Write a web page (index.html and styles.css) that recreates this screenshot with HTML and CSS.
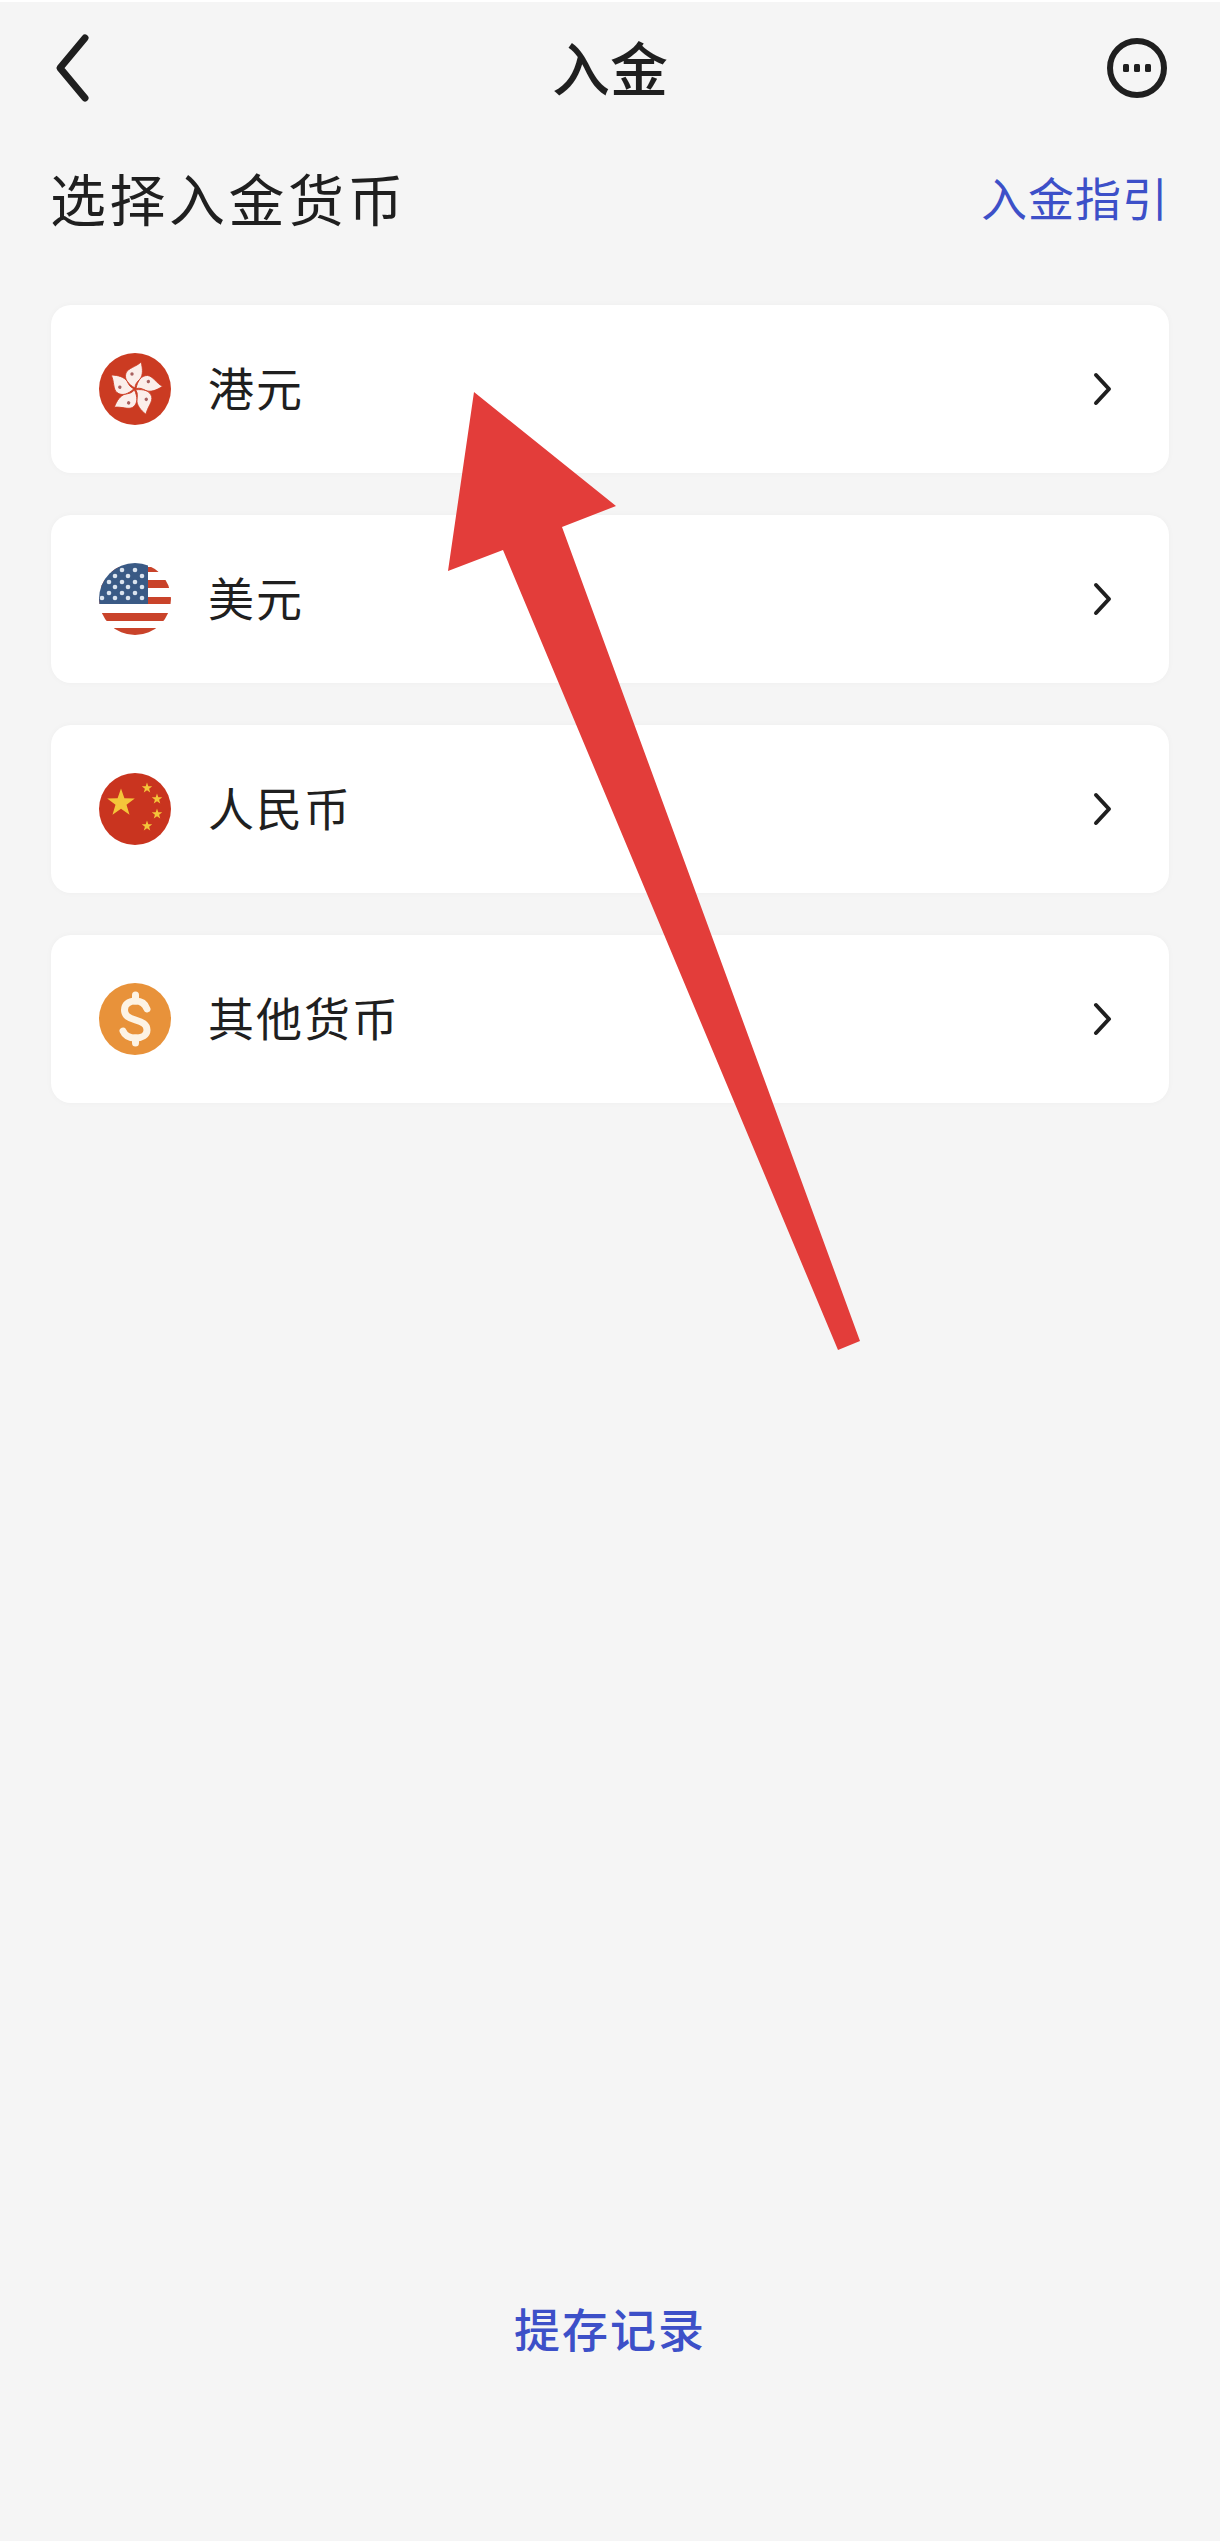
FILE: index.html
```html
<!DOCTYPE html>
<html lang="zh-CN">
<head>
  <meta charset="UTF-8" />
  <meta name="viewport" content="width=device-width, initial-scale=1.0" />
  <title>入金</title>
  <link rel="stylesheet" href="styles.css">
</head>
<body>
  <div class="page">
    <header class="nav">
      <svg class="nav-back" viewBox="0 0 40 70" width="40" height="70">
        <path d="M34 5 L9 35 L34 65" />
      </svg>
      <h1 class="nav-title">入金</h1>
      <svg class="nav-more" viewBox="0 0 60 60" width="60" height="60">
        <circle class="more-ring" cx="30" cy="30" r="27" />
        <rect x="16" y="26" width="6" height="8" rx="1.5" />
        <rect x="27" y="26" width="6" height="8" rx="1.5" />
        <rect x="38" y="26" width="6" height="8" rx="1.5" />
      </svg>
    </header>

    <div class="section-head">
      <h2 class="section-title">选择入金货币</h2>
      <a class="link guide">入金指引</a>
    </div>

    <ul class="currency-list">
      <li class="currency">
        <svg class="flag" viewBox="0 0 72 72" width="72" height="72">
          <defs>
            <g id="petal">
              <path d="M36 35 C29 31 25 26 27 20 C29 15 37 14 42 9 C44 16 44 22 41 26 C38 29 36 31 36 35 Z" fill="#fbeeea" stroke="#cb3b22" stroke-width=".8" />
              <circle cx="33" cy="21" r="1.7" fill="#a8605f" />
            </g>
          </defs>
          <circle cx="36" cy="36" r="36" fill="#cb3b22" />
          <use href="#petal" />
          <use href="#petal" transform="rotate(72 36 36)" />
          <use href="#petal" transform="rotate(144 36 36)" />
          <use href="#petal" transform="rotate(216 36 36)" />
          <use href="#petal" transform="rotate(288 36 36)" />
        </svg>
        <span class="currency-name">港元</span>
        <svg class="chevron" viewBox="0 0 20 34" width="20" height="34">
          <path d="M3 3 L16 17 L3 31" />
        </svg>
      </li>
      <li class="currency">
        <svg class="flag" viewBox="0 0 72 72" width="72" height="72">
          <defs>
            <clipPath id="disc"><circle cx="36" cy="36" r="36" /></clipPath>
          </defs>
          <g clip-path="url(#disc)">
            <rect width="72" height="72" fill="#fff" />
            <rect y="4" width="72" height="5" fill="#c9432a" />
            <rect y="17" width="72" height="8" fill="#c9432a" />
            <rect y="34" width="72" height="7" fill="#c9432a" />
            <rect y="50" width="72" height="8" fill="#c9432a" />
            <rect y="65" width="72" height="7" fill="#c9432a" />
            <rect width="49" height="41" fill="#3a5a85" />
            <g fill="#dbe4ef">
              <circle cx="23" cy="7" r="2.3" /><circle cx="36" cy="7" r="2.3" />
              <circle cx="16" cy="13" r="2.3" /><circle cx="29" cy="13" r="2.3" /><circle cx="43" cy="13" r="2.3" />
              <circle cx="10" cy="19" r="2.3" /><circle cx="23" cy="19" r="2.3" /><circle cx="36" cy="19" r="2.3" />
              <circle cx="16" cy="24" r="2.3" /><circle cx="29" cy="24" r="2.3" /><circle cx="43" cy="24" r="2.3" />
              <circle cx="10" cy="30" r="2.3" /><circle cx="23" cy="30" r="2.3" /><circle cx="36" cy="30" r="2.3" />
              <circle cx="3" cy="35" r="2.3" /><circle cx="16" cy="35" r="2.3" /><circle cx="29" cy="35" r="2.3" /><circle cx="43" cy="35" r="2.3" />
            </g>
          </g>
        </svg>
        <span class="currency-name">美元</span>
        <svg class="chevron" viewBox="0 0 20 34" width="20" height="34">
          <path d="M3 3 L16 17 L3 31" />
        </svg>
      </li>
      <li class="currency">
        <svg class="flag" viewBox="0 0 72 72" width="72" height="72">
          <defs>
            <polygon id="star" points="0,-10 2.35,-3.24 9.51,-3.09 3.8,1.24 5.88,8.09 0,4 -5.88,8.09 -3.8,1.24 -9.51,-3.09 -2.35,-3.24" />
          </defs>
          <circle cx="36" cy="36" r="36" fill="#c9341f" />
          <g fill="#f4c53a">
            <use href="#star" transform="translate(22 30) scale(1.45)" />
            <use href="#star" transform="translate(48 15) scale(.55)" />
            <use href="#star" transform="translate(58 26) scale(.55)" />
            <use href="#star" transform="translate(58 41) scale(.55)" />
            <use href="#star" transform="translate(48 53) scale(.55)" />
          </g>
        </svg>
        <span class="currency-name">人民币</span>
        <svg class="chevron" viewBox="0 0 20 34" width="20" height="34">
          <path d="M3 3 L16 17 L3 31" />
        </svg>
      </li>
      <li class="currency">
        <svg class="flag" viewBox="0 0 72 72" width="72" height="72">
          <circle cx="36" cy="36" r="36" fill="#e8923a" />
          <path class="dollar" d="M48 26 C46 20 42 18 36.5 18 C29 18 25.5 22 25.5 27 C25.5 33 30 35 36.5 37 C43 39 48 41 48 47 C48 52 43 55 36.5 55 C30 55 26 53 24 48" />
          <path class="dollar" d="M36.5 12 V18 M36.5 55 V60" />
        </svg>
        <span class="currency-name">其他货币</span>
        <svg class="chevron" viewBox="0 0 20 34" width="20" height="34">
          <path d="M3 3 L16 17 L3 31" />
        </svg>
      </li>
    </ul>

    <a class="link records">提存记录</a>

    <svg class="arrow" viewBox="0 0 1220 2541" width="1220" height="2541">
      <polygon points="474,392 616,506 562,527 860,1341 838,1350 503,550 448,571" />
    </svg>
  </div>
</body>
</html>
```

FILE: styles.css
```css
* {
  box-sizing: border-box;
}
body {
  margin: 0;
  font-family: "Noto Sans CJK SC", "Noto Sans", sans-serif;
  background-color: #f5f5f5;
  color: #1f1f1f;
}
.page {
  position: relative;
  display: flex;
  flex-direction: column;
  height: 2541px;
  padding: 0 51px;
  overflow: hidden;
  border-top: 2px solid #fff;
}
.nav {
  display: grid;
  grid-template-columns: 1fr auto 1fr;
  align-items: center;
  height: 132px;
}
.nav-back path {
  fill: none;
  stroke: #1f1f1f;
  stroke-width: 7;
  stroke-linecap: round;
  stroke-linejoin: round;
}
.nav-title {
  margin: 0;
  padding-bottom: 4px;
  font-size: 58px;
  font-weight: 500;
  line-height: 70px;
}
.nav-more {
  justify-self: end;
  margin-right: 2px;
  fill: #1f1f1f;
}
.more-ring {
  fill: none;
  stroke: #1f1f1f;
  stroke-width: 6;
}
.section-head {
  display: flex;
  align-items: center;
  justify-content: space-between;
  height: 70px;
  margin-top: 27px;
  margin-bottom: 74px;
}
.section-title {
  margin: 0 0 0 -1px;
  font-size: 56px;
  font-weight: 400;
  letter-spacing: 3.5px;
}
.link {
  color: #3d50c8;
  font-size: 46px;
  letter-spacing: 1px;
}
.currency-list {
  display: flex;
  flex-direction: column;
  gap: 42px;
  margin: 0;
  padding: 0;
  list-style: none;
}
.currency {
  display: flex;
  align-items: center;
  height: 168px;
  padding: 0 56px 0 48px;
  background: white;
  border-radius: 20px;
  box-shadow: 0 0 6px rgba(0,0,0,0.03);
}
.flag {
  flex: none;
}
.currency-name {
  margin-left: 37px;
  padding-bottom: 6px;
  font-size: 46px;
  letter-spacing: 2px;
}
.chevron {
  margin-left: auto;
}
.chevron path {
  fill: none;
  stroke: #1f1f1f;
  stroke-width: 4;
  stroke-linecap: round;
  stroke-linejoin: round;
}
.dollar {
  fill: none;
  stroke: #fdf3e4;
  stroke-width: 7;
  stroke-linecap: round;
}
.records {
  margin-top: auto;
  margin-bottom: 181px;
  align-self: center;
  font-weight: 500;
  letter-spacing: 2px;
}
.arrow {
  position: absolute;
  top: -2px;
  left: 0;
  fill: #e33d3a;
}
```
